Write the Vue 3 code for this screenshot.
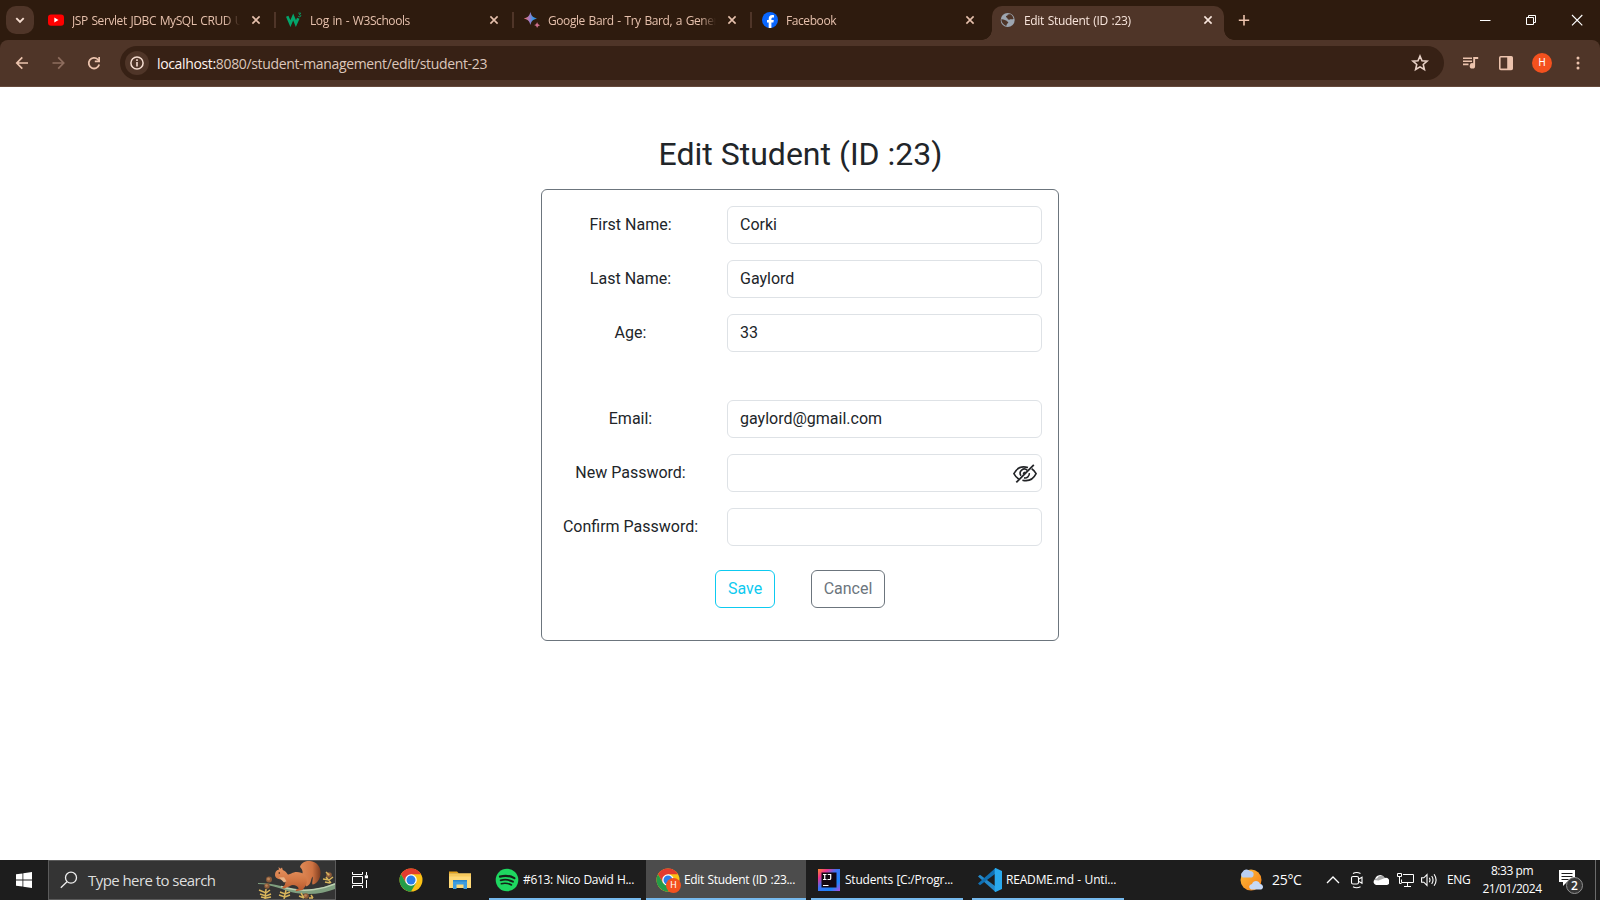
<script setup>
const tabs = [
  { icon: 'youtube', title: 'JSP Servlet JDBC MySQL CRUD U' },
  { icon: 'w3', title: 'Log in - W3Schools' },
  { icon: 'bard', title: 'Google Bard - Try Bard, a Gener' },
  { icon: 'facebook', title: 'Facebook' },
  { icon: 'globe', title: 'Edit Student (ID :23)', active: true },
]
const fields = [
  { label: 'First Name:', value: 'Corki', type: 'text' },
  { label: 'Last Name:', value: 'Gaylord', type: 'text' },
  { label: 'Age:', value: '33', type: 'text', last: true },
  { label: 'Email:', value: 'gaylord@gmail.com', type: 'text' },
  { label: 'New Password:', value: '', type: 'password', eye: true },
  { label: 'Confirm Password:', value: '', type: 'password' },
]
</script>

<template>
  <div class="screen">
    <header class="strip">
      <button class="tab-search">
        <svg width="28" height="28" viewBox="0 0 28 28"><path d="M10.3 12.2 14 15.9l3.7-3.7" fill="none" stroke="#f6ddd0" stroke-width="1.9" /></svg>
      </button>
      <div v-for="(t, i) in tabs" :key="t.title" class="tab" :class="{ active: t.active, divided: i < 3 }">
        <svg class="fav" width="16" height="16" viewBox="0 0 16 16">
          <g v-if="t.icon === 'youtube'">
            <rect x="0" y="2.4" width="16" height="11.4" rx="3" fill="#f00" />
            <path d="M6.3 5.6v4.9l4.2-2.45z" fill="#fff" />
          </g>
          <g v-else-if="t.icon === 'w3'" fill="none" stroke="#04a56b">
            <path d="M1.2 4.2 4.4 11.6 7.2 5 9.9 11.6 12.3 6.2" stroke-width="2.7" />
            <path d="M12.3 1.1h2.4l-1.3 1.6c2 .1 1.7 2.3-.1 2.1l-1-.4" stroke-width=".9" />
          </g>
          <g v-else-if="t.icon === 'bard'">
            <defs><linearGradient id="bard" x1="0" y1="0" x2="1" y2="0"><stop offset="0" stop-color="#e9725f" /><stop offset=".42" stop-color="#a77bc4" /><stop offset=".7" stop-color="#3a96e8" /><stop offset="1" stop-color="#2f86dd" /></linearGradient></defs>
            <path d="M6.4-.1C7.3 3.8 8.8 5.4 13 6.4 8.8 7.4 7.3 9 6.4 13 5.5 9 4 7.4-.2 6.4 4 5.4 5.5 3.8 6.4-.1z" fill="url(#bard)" />
            <path d="M13.1 10c.5 2 1.2 2.6 3 3.1-1.8.5-2.5 1.1-3 3.1-.5-2-1.2-2.6-3-3.1 1.8-.5 2.5-1.1 3-3.1z" fill="#ce6f8c" />
          </g>
          <g v-else-if="t.icon === 'facebook'">
            <circle cx="8" cy="8" r="8" fill="#0866ff" />
            <path d="M6.7 16v-5.4H5V8.1h1.7V7c0-2.7 1.2-3.9 3.7-3.9.5 0 1.3.1 1.6.2v2.2h-.9c-1.2 0-1.7.5-1.7 1.6v1h2.4l-.4 2.5h-2V16z" fill="#fff" />
          </g>
          <g v-else>
            <circle cx="7.7" cy="8" r="7" fill="#9da6b1" />
            <path d="M1.3 7.2c2.400-.3 3.300 1.200 5.100 1.200.4 1.500 1.800.8 1.900 2 0 1-1.700.9-1.600 2.400.1.800-.4 1.200-1.100.9C3 12.500 1.300 10 1.300 7.200zM7.700 2.400c1.300.2 2.500-.4 3.500.3 1.300.9 2 2.600 2.400 4-1 1.100-3.200 0-3.900.9-.8.5-2.300 0-2.200-1 .2-1.200-1.800-.8-1.500-2.100.2-.6 1.300-.7 1.700-1.200z" fill="#4f3528" />
          </g>
        </svg>
        <span class="title">{{ t.title }}</span>
        <svg class="close" width="16" height="16" viewBox="0 0 16 16"><path d="m4.400 4.400 7.200 7.200m0-7.200-7.200 7.200" stroke="currentColor" stroke-width="1.600" /></svg>
      </div>
      <svg class="plus" width="28" height="28" viewBox="0 0 28 28"><path d="M14 9v10.400M8.800 14.200h10.400" stroke="#ecc3ad" stroke-width="1.600" /></svg>
      <div class="window">
        <svg width="46" height="40" viewBox="0 0 46 40"><path d="M18 20.500h10.500" stroke="#fff" /></svg>
        <svg width="46" height="40" viewBox="0 0 46 40"><path d="M18.500 17.500h7v7h-7zM20.500 17.500v-2h7v7h-2" fill="none" stroke="#fff" /></svg>
        <svg width="46" height="40" viewBox="0 0 46 40"><path d="m18 15 10.300 10.300m0-10.300L18 25.300" stroke="#fff" stroke-width="1.100" /></svg>
      </div>
    </header>

    <div class="toolbar">
      <svg class="tool" viewBox="0 0 36 36"><path d="M28 18H17m5.300-5.600L16.800 18l5.500 5.600" fill="none" stroke="#ecc3ad" stroke-width="1.700" /></svg>
      <svg class="tool" viewBox="0 0 36 36"><path d="M16.500 18h11m-5.300-5.600 5.500 5.600-5.500 5.600" fill="none" stroke="#8e6d5e" stroke-width="1.700" /></svg>
      <svg class="tool" viewBox="0 0 36 36"><path d="M27.200 19.500a5.300 5.300 0 1 1-1.300-5l1.300 1.400" fill="none" stroke="#ecc3ad" stroke-width="1.800" /><path d="M28 12v5.200h-5.200v-1.700h3.500V12z" fill="#ecc3ad" /></svg>
      <div class="omnibox">
        <span class="site">
          <svg width="24" height="24" viewBox="0 0 24 24"><circle cx="12" cy="12" r="6.100" fill="none" stroke="#f5ddd1" stroke-width="1.500" /><path d="M12 11v4.400M12 8.300v1.600" stroke="#f5ddd1" stroke-width="1.600" /></svg>
        </span>
        <span class="url"><b>localhost:</b>8080/student-management/edit/student-23</span>
        <svg class="star" width="20" height="20" viewBox="0 0 24 24"><path d="m12 3.600 2.400 5.700 6.100.5-4.600 4 1.400 6-5.300-3.200-5.300 3.200 1.400-6-4.600-4 6.100-.5z" fill="none" stroke="#e8d1c6" stroke-width="1.900" /></svg>
      </div>
      <div class="actions">
        <svg width="36" height="36" viewBox="0 0 36 36"><path d="M11 13.200h9M11 16.300h9M11 19.400h5.500" stroke="#ecc3ad" stroke-width="1.600" /><path d="M21.200 12.100h5v1.900h-3.100v6.700a2.700 2.700 0 1 1-1.900-2.400z" fill="#ecc3ad" /></svg>
        <svg width="36" height="36" viewBox="0 0 36 36"><rect x="11.800" y="11.800" width="12.400" height="12.600" rx="1" fill="none" stroke="#ecc3ad" stroke-width="1.600" /><path d="M19.200 11.800h5v12.600h-5z" fill="#ecc3ad" /></svg>
        <span class="avatar">H</span>
        <svg width="36" height="36" viewBox="0 0 36 36" fill="#ecc3ad"><circle cx="18" cy="13" r="1.500" /><circle cx="18" cy="18" r="1.500" /><circle cx="18" cy="23" r="1.500" /></svg>
      </div>
    </div>

    <main class="page">
      <h1>Edit Student (ID :23)</h1>
      <form class="card" @submit.prevent>
        <div v-for="f in fields" :key="f.label" class="row" :class="{ last: f.last }">
          <label>{{ f.label }}</label>
          <div class="control">
            <input :type="f.type" :value="f.value" />
            <svg v-if="f.eye" class="eye" width="24" height="20" viewBox="0 0 24 20" fill="none" stroke="#222427" stroke-width="1.600">
              <path d="M15 3.600C8 1.400 3.300 5 .9 9.700c1.300 2.500 3 4.200 5 5.400M18.700 4.700c1.900 1.200 3.300 2.900 4.400 5C20.500 15 15.600 17.700 9.400 16.200" />
              <path d="M14.300 6.300a4.200 4.200 0 0 0-6.300 5.500M16.300 9.200a4.300 4.300 0 0 1-5.300 4.700M12.500 8.200a2 2 0 0 0-2 2" />
              <path d="M20.800.8 3.300 18.400" stroke-width="1.800" />
            </svg>
          </div>
        </div>
        <div class="buttons">
          <button class="btn save">Save</button>
          <button class="btn cancel">Cancel</button>
        </div>
      </form>
    </main>

    <footer class="taskbar">
      <div class="start"><svg width="16" height="16" viewBox="0 0 16 16" fill="#fff"><path d="M0 2.300 6.500 1.400v6.200H0zM7.300 1.300 16 0v7.600H7.300zM0 8.400h6.500v6.200L0 13.700zM7.300 8.400H16V16l-8.700-1.200z" /></svg></div>
      <div class="search">
        <svg class="lens" width="18" height="18" viewBox="0 0 18 18"><circle cx="11" cy="6.700" r="5.500" fill="none" stroke="#eee" stroke-width="1.300" /><path d="M7 10.700.8 16.800" stroke="#eee" stroke-width="1.300" /></svg>
        <span>Type here to search</span>
        <svg class="squirrel" width="78" height="38" viewBox="0 0 78 38">
          <defs>
            <linearGradient id="fur" x1="0" y1="0" x2="0" y2="1"><stop offset="0" stop-color="#e79562" /><stop offset=".55" stop-color="#d27643" /><stop offset="1" stop-color="#b4562c" /></linearGradient>
            <linearGradient id="tail" x1="0" y1="0" x2="1" y2="0"><stop offset="0" stop-color="#df8a57" /><stop offset=".6" stop-color="#cf7342" /><stop offset="1" stop-color="#7d3c20" /></linearGradient>
          </defs>
          <path d="M1 22c8 0 15 1 23 3 10 3 21 5 33 3 8-1 15-3 21-6v6c-8 3-17 5-27 5-12 0-21-3-29-6C15 25 8 23 1 23z" fill="#7f9f7f" />
          <path d="M24 25.500c10 3 21 4.800 33 3 8-1 15-3 21-5.500" fill="none" stroke="#bdd0b2" stroke-width="1.500" />
          <path d="M43 15c4-2 3-6 0-9 1-4 5-6.500 10-6 7 .5 11 6 10.500 13-.5 6-4 10-8 10.500-1-3 1-5 0-8-2 3-1 8-6 10z" fill="url(#tail)" />
          <path d="M18 14c0-3 1-4.500 4-5.500L21.500 6l2 1.800L25 6.500l.8 2.500c3 1 3.700 3 5 4.500 3 0 4.500-2.500 9-2.500 6 0 10.500 4 10 10-.3 4-3 5.500-4 8l-7 1.300v-1.500l3-1.300c-1-2-3-3.500-6-3.500-2 0-3 1.500-5 2l-3.500 1.500-2.500-.5 3-3 .8-3.500-4.500-2c-4-.5-5.800-1.700-6.100-4.500z" fill="url(#fur)" />
          <path d="m22 16.500 5-.3 2.500 4-2.500 1.300z" fill="#e9b488" />
          <circle cx="22.300" cy="12" r=".8" fill="#2a1710" />
          <g fill="#8b5a38"><circle cx="12" cy="18.500" r="3" /><circle cx="10" cy="25" r="2.700" /><circle cx="49" cy="35" r="2.800" /><circle cx="72" cy="14" r="2.800" /></g>
          <g fill="#b9855a"><circle cx="11.500" cy="18" r="1.500" /><circle cx="9.500" cy="24.500" r="1.300" /><circle cx="48.500" cy="34.500" r="1.300" /><circle cx="71.500" cy="13.500" r="1.300" /></g>
          <g fill="none" stroke="#d8b55c" stroke-width="1.500"><path d="M9 28 8 38M2 29l7 3 4-3M3 33l6 2 5-2M4 36l5 1 5-1M29 29l-2 9M23 31l5 2 5-2M22 34l6 2 5-2M44 32l3 5M42 35l5 2M54 34l2 3M52 37l4 0M69 11l3 3M69 16l5 6M66 18l6 1 4-3M68 21l5 1" /></g>
        </svg>
      </div>
      <div class="view"><svg width="16" height="16" viewBox="0 0 16 16" fill="none" stroke="#fff"><path d="M.5 0v2.500h10V0M.5 16v-2.500h10V16M.500 4.500h10v7H.500zM14.500 0v3M14.500 8v8" /><path d="M12.800 4.800h3.200" stroke-width="3" /></svg></div>
      <div class="pin chrome-pin">
        <svg width="24" height="24" viewBox="0 0 24 24">
          <circle cx="12" cy="12" r="11.500" fill="#fbc116" /><path d="M12 12 7 14.900 2 6.300A11.500 11.500 0 0 1 22 6.300H12z" fill="#e33b2e" /><path d="M7 14.900 2 6.300a11.500 11.500 0 0 0 10 17.200l5-8.600z" fill="#249c48" /><circle cx="12" cy="12" r="5.800" fill="#fff" /><circle cx="12" cy="12" r="4.500" fill="#2b7de9" />
        </svg>
      </div>
      <div class="pin">
        <svg width="22" height="20" viewBox="0 0 22 20"><path d="M0 1.500h8l2 2H0z" fill="#e6a21a" /><path d="M0 3.500h22v14.500H0z" fill="#ffd978" /><path d="M0 3.500h22v3H0z" fill="#f7c95c" /><path d="M4 11h14v8h-3.500v-4.500h-7V19H4z" fill="#3f9de0" /><path d="M4 10h14v1.500H4z" fill="#2d87cb" /></svg>
      </div>
      <div class="task spotify">
        <svg width="24" height="24" viewBox="0 0 24 24"><circle cx="12" cy="12" r="11.300" fill="#1ed760" /><g fill="none" stroke="#152018" stroke-linecap="round"><path d="M5 8.600c5-1.400 10-.9 14.400 1.500" stroke-width="2.200" /><path d="M5.700 12.300c4.300-1.200 8.400-.7 12.200 1.400" stroke-width="1.900" /><path d="M6.300 15.700c3.600-.9 7-.5 10.200 1.300" stroke-width="1.500" /></g></svg>
        <span>#613: Nico David H...</span>
      </div>
      <div class="task current">
        <div class="chrome-badge">
          <svg width="24" height="24" viewBox="0 0 24 24">
            <circle cx="12" cy="12" r="11.500" fill="#fbc116" /><path d="M12 12 7 14.900 2 6.300A11.500 11.500 0 0 1 22 6.300H12z" fill="#e33b2e" /><path d="M7 14.900 2 6.300a11.500 11.500 0 0 0 10 17.200l5-8.600z" fill="#249c48" /><circle cx="12" cy="12" r="5.800" fill="#fff" /><circle cx="12" cy="12" r="4.500" fill="#2b7de9" />
          </svg>
          <i>H</i>
        </div>
        <span>Edit Student (ID :23...</span>
      </div>
      <div class="task idea">
        <svg width="22" height="22" viewBox="0 0 22 22"><defs><linearGradient id="idea" x1="0" y1="0" x2="1" y2="1"><stop offset="0" stop-color="#fc8a2c" /><stop offset=".22" stop-color="#f0328b" /><stop offset=".45" stop-color="#3c73f5" /><stop offset=".75" stop-color="#1a83f8" /><stop offset="1" stop-color="#b04ce0" /></linearGradient></defs><path d="M0 0h22v22H0z" fill="url(#idea)" /><path d="M3.500 3.500h15v15h-15z" fill="#130812" /><path d="M5 5.500h3.500M5 10.500h3.500M6.750 5.500v5M9.700 5.500h3v4q0 1-1 1H9.500M5 16.500h5.500" fill="none" stroke="#fff" stroke-width="1.200" /></svg>
        <span>Students [C:/Progr...</span>
      </div>
      <div class="task code">
        <svg width="24" height="24" viewBox="0 0 24 24"><path d="M0 8.500 2 6.800 20 20.200 17.500 24z" fill="#2489ca" /><path d="M0 15.500 2 17.200 20 3.800 17.500 0z" fill="#1070b3" /><path d="M17.500 0 24 3v18l-6.500 3c-.8-.4-.8-1-.8-1.600V1.600c0-.6 0-1.200.8-1.600z" fill="#29a9ed" /></svg>
        <span>README.md - Unti...</span>
      </div>
      <div class="tray">
        <svg class="weather" width="26" height="24" viewBox="0 0 26 24"><defs><linearGradient id="sun" x1="0" y1="0" x2="1" y2="1"><stop offset="0" stop-color="#ffbd3c" /><stop offset="1" stop-color="#f47d16" /></linearGradient></defs><circle cx="13" cy="12" r="10.500" fill="url(#sun)" /><path d="M4.500 9.500a3.300 3.300 0 0 1 0-5.500A4.500 4.500 0 0 1 12 3c3 0 4 2 3.500 4 0 1.500-1 2.500-2 2.500z" fill="#b9cff2" /><path d="M14.500 21.500c-4 0-4.500-5-.5-5.600 1-4 7-4 8 0 4 .4 4 5.600 0 5.600z" fill="#c6d9f8" /></svg>
        <span class="temp">25°C</span>
        <svg class="chev" width="14" height="10" viewBox="0 0 14 10"><path d="m1 8 6-6 6 6" fill="none" stroke="#fff" stroke-width="1.300" /></svg>
        <svg class="meet" width="14" height="18" viewBox="0 0 14 18" fill="none" stroke="#fff" stroke-width="1.100"><rect x="1.500" y="5.500" width="7" height="7.500" rx="1.500" /><path d="m8.500 8.300 3.500-2v6l-3.500-2M3 2.500q3.500-2 7.500 0M3 15.800q3.500 2 7.500 0" /></svg>
        <svg class="cloud" width="16" height="12" viewBox="0 0 16 12"><path d="M3 11a3 3 0 0 1-1-5.500A5 5 0 0 1 11.500 4 3.500 3.500 0 0 1 14 11z" fill="#fff" /><path d="M1 6q1.500-2 3-1.500A4.500 4.500 0 0 1 12 4L5.500 6.500z" fill="#a9a9a9" /></svg>
        <svg class="net" width="17" height="16" viewBox="0 0 17 16" fill="none" stroke="#fff"><path d="M6 2.500h10.500v8H4.500V7.500M10.500 10.500v4M7 14.500h7M.5 1.500h4v3h-4zM2.500 4.500v7h2" /></svg>
        <svg class="sound" width="17" height="14" viewBox="0 0 17 14" fill="none" stroke="#fff" stroke-width="1.100"><path d="M.6 4.800h2.200L6 1.600v10.800L2.800 9.200H.6zM8.300 4.800q1.400 2.200 0 4.400M10.700 3q2.700 4 0 8M13.100 1.200q4 5.800 0 11.600" /></svg>
        <span class="lang">ENG</span>
        <div class="clock"><span>8:33 pm</span><span>21/01/2024</span></div>
        <div class="note">
          <svg width="26" height="26" viewBox="0 0 26 26"><path d="M1 2h16v12H9l-4 4v-4H1z" fill="#fff" /><path d="M3.500 5.500h11M3.500 8.500h11M3.500 11.500h7" stroke="#1d1d1d" /><circle cx="16.500" cy="17.500" r="8" fill="#363636" stroke="#929292" /></svg>
          <i>2</i>
        </div>
        <div class="peek"></div>
      </div>
    </footer>
  </div>
</template>

<style>
body { background: #fff; overflow: hidden; }
</style>

<style scoped>
* { box-sizing: border-box; }
svg { display: block; flex: none; }
.screen { width: 1600px; height: 900px; display: flex; flex-direction: column; font-family: "Open Sans", "Noto Sans", sans-serif; overflow: hidden; }
.strip { height: 40px; flex: none; background: #2e1b0e; display: flex; padding-left: 6px; }
.tab-search { width: 28px; height: 28px; margin: 6px 4px 0 0; padding: 0; border: 0; border-radius: 10px; background: #4f3528; }
.tab { position: relative; width: 238px; height: 40px; padding: 0 12px 0 10px; display: flex; align-items: center; color: #e6c0ac; font-size: 12px; }
.tab.divided::after { content: ""; position: absolute; right: 0; top: 12px; width: 2px; height: 16px; background: #4f3528; }
.title { width: 168px; margin: 1px 8px 0 8px; flex: none; overflow: hidden; white-space: nowrap; letter-spacing: -0.42px; word-spacing: 1px; -webkit-mask-image: linear-gradient(90deg, #000 152px, transparent 168px); mask-image: linear-gradient(90deg, #000 152px, transparent 168px); }
.close { color: #e6c0ac; }
.tab.active { width: 232px; height: 34px; margin: 6px 0 0 2px; padding: 0 8px 6px; border-radius: 10px 10px 0 0; background: #4f3528; }
.tab.active .title { color: #f8e5dc; letter-spacing: -0.33px; }
.tab.active .close { color: #f8e5dc; }
.tab.active::before, .tab.active::after { content: ""; position: absolute; bottom: 0; width: 10px; height: 10px; }
.tab.active::before { left: -10px; background: radial-gradient(circle at 0 0, transparent 9.500px, #4f3528 10px); }
.tab.active::after { right: -10px; background: radial-gradient(circle at 100% 0, transparent 9.500px, #4f3528 10px); }
.plus { margin: 6px 0 0 6px; }
.window { display: flex; margin-left: auto; }
.toolbar { height: 47px; flex: none; background: #4f3528; border-bottom: 1px solid #65493b; border-radius: 8px 8px 0 0; box-shadow: 0 -8px 0 0 #2e1b0e; clip-path: inset(0); display: flex; align-items: center; }
.tool { width: 36px; height: 36px; }
.omnibox { width: 1324px; height: 34px; margin-left: 12px; border-radius: 17px; background: #372115; display: flex; align-items: center; padding: 0 14px 0 5px; }
.site { border-radius: 50%; background: #4f3528; }
.url { flex: 1; padding-left: 8px; font-size: 14px; letter-spacing: -0.35px; color: #dcc6bb; white-space: nowrap; }
.url b { font-weight: 400; color: #fff3ed; }
.actions { margin-left: 8px; display: flex; align-items: center; }
.avatar { width: 20px; height: 20px; margin: 0 8px; border-radius: 50%; background: #f4511e; color: #fff; font: 10px/20px Roboto, sans-serif; text-align: center; }
.page { height: 773px; flex: none; background: #fff; padding-top: 48px; font-family: Roboto, sans-serif; color: #212529; display: flex; flex-direction: column; align-items: center; }
h1 { margin: 0; font-size: 32px; line-height: 39px; font-weight: 400; padding: 0 0 15px 1px; }
.card { width: 518px; height: 452px; border: 1px solid #6c757d; border-radius: 6px; padding: 16px; }
.row { display: flex; gap: 24px; margin-bottom: 16px; }
.row.last { margin-bottom: 48px; }
label { width: 145px; height: 38px; line-height: 38px; font-size: 16px; text-align: center; white-space: nowrap; }
.control { position: relative; width: 315px; }
input { display: block; width: 315px; height: 38px; border: 1px solid #dee2e6; border-radius: 6px; padding: 5px 12px 7px; background: #fff; color: #212529; font: 16px/24px Roboto, sans-serif; outline: 0; }
.eye { position: absolute; right: 5px; top: 10px; }
.buttons { display: flex; justify-content: center; gap: 36px; padding-top: 8px; }
.btn { height: 38px; padding: 0 0 2px; border: 1px solid; border-radius: 6px; background: #fff; font: 16px Roboto, sans-serif; }
.save { width: 60px; color: #0dcaf0; }
.cancel { width: 74px; color: #6c757d; }
.taskbar { height: 40px; flex: none; display: flex; background: #1d1d1d; color: #fff; white-space: nowrap; }
.start { width: 48px; padding: 12px 16px; }
.search { width: 288px; height: 40px; background: #343434; border: 1px solid #5b5b5b; display: flex; align-items: center; padding-left: 11px; font-size: 15px; letter-spacing: -0.56px; color: #dedede; }
.search .lens { margin-right: 10px; }
.squirrel { margin-left: auto; }
.view { padding: 12px 0 0 16px; width: 63px; }
.pin { display: flex; align-items: center; width: 40px; }
.chrome-pin { width: 50px; }
.task { display: flex; align-items: center; border-bottom: 2px solid #76b9ed; font-size: 12px; letter-spacing: -0.32px; word-spacing: 0.600px; padding-top: 2px; }
.task span { margin-top: -1px; }
.spotify { width: 152px; padding-left: 6px; gap: 4px; margin-right: 5px; }
.current { width: 160px; background: #4c4c4c; padding-left: 10px; gap: 4px; margin-right: 5px; }
.chrome-badge { position: relative; }
.chrome-badge i { position: absolute; left: 10px; top: 10px; width: 15px; height: 15px; border-radius: 50%; background: #f4511e; font: 9px/15px Roboto, sans-serif; text-align: center; letter-spacing: 0; }
.idea { width: 152px; padding-left: 7px; gap: 5px; margin-right: 9px; letter-spacing: -0.220px; }
.code { width: 152px; padding-left: 6px; gap: 4px; letter-spacing: -0.180px; }
.tray { margin-left: auto; width: 362px; display: flex; align-items: center; }
.temp { width: 51px; margin-left: 8px; font-size: 14px; letter-spacing: -0.3px; margin-top: -1px; }
.chev { margin-left: 3px; }
.meet { margin-left: 10px; }
.cloud { margin-left: 9px; }
.net { margin-left: 8px; }
.sound { margin-left: 7px; }
.lang { width: 30px; margin: -1px 0 0 9px; font-size: 12px; letter-spacing: -0.4px; }
.clock { width: 70px; display: flex; flex-direction: column; align-items: center; font-size: 12px; line-height: 18px; letter-spacing: -0.460px; }
.note { position: relative; margin-left: 11px; padding-top: 2px; }
.note i { position: absolute; left: 9px; top: 11px; width: 15px; text-align: center; font: 600 12px/17px "Open Sans", sans-serif; }
.peek { width: 1px; height: 40px; margin: 0 4px 0 auto; background: #6b6b6b; }
</style>
